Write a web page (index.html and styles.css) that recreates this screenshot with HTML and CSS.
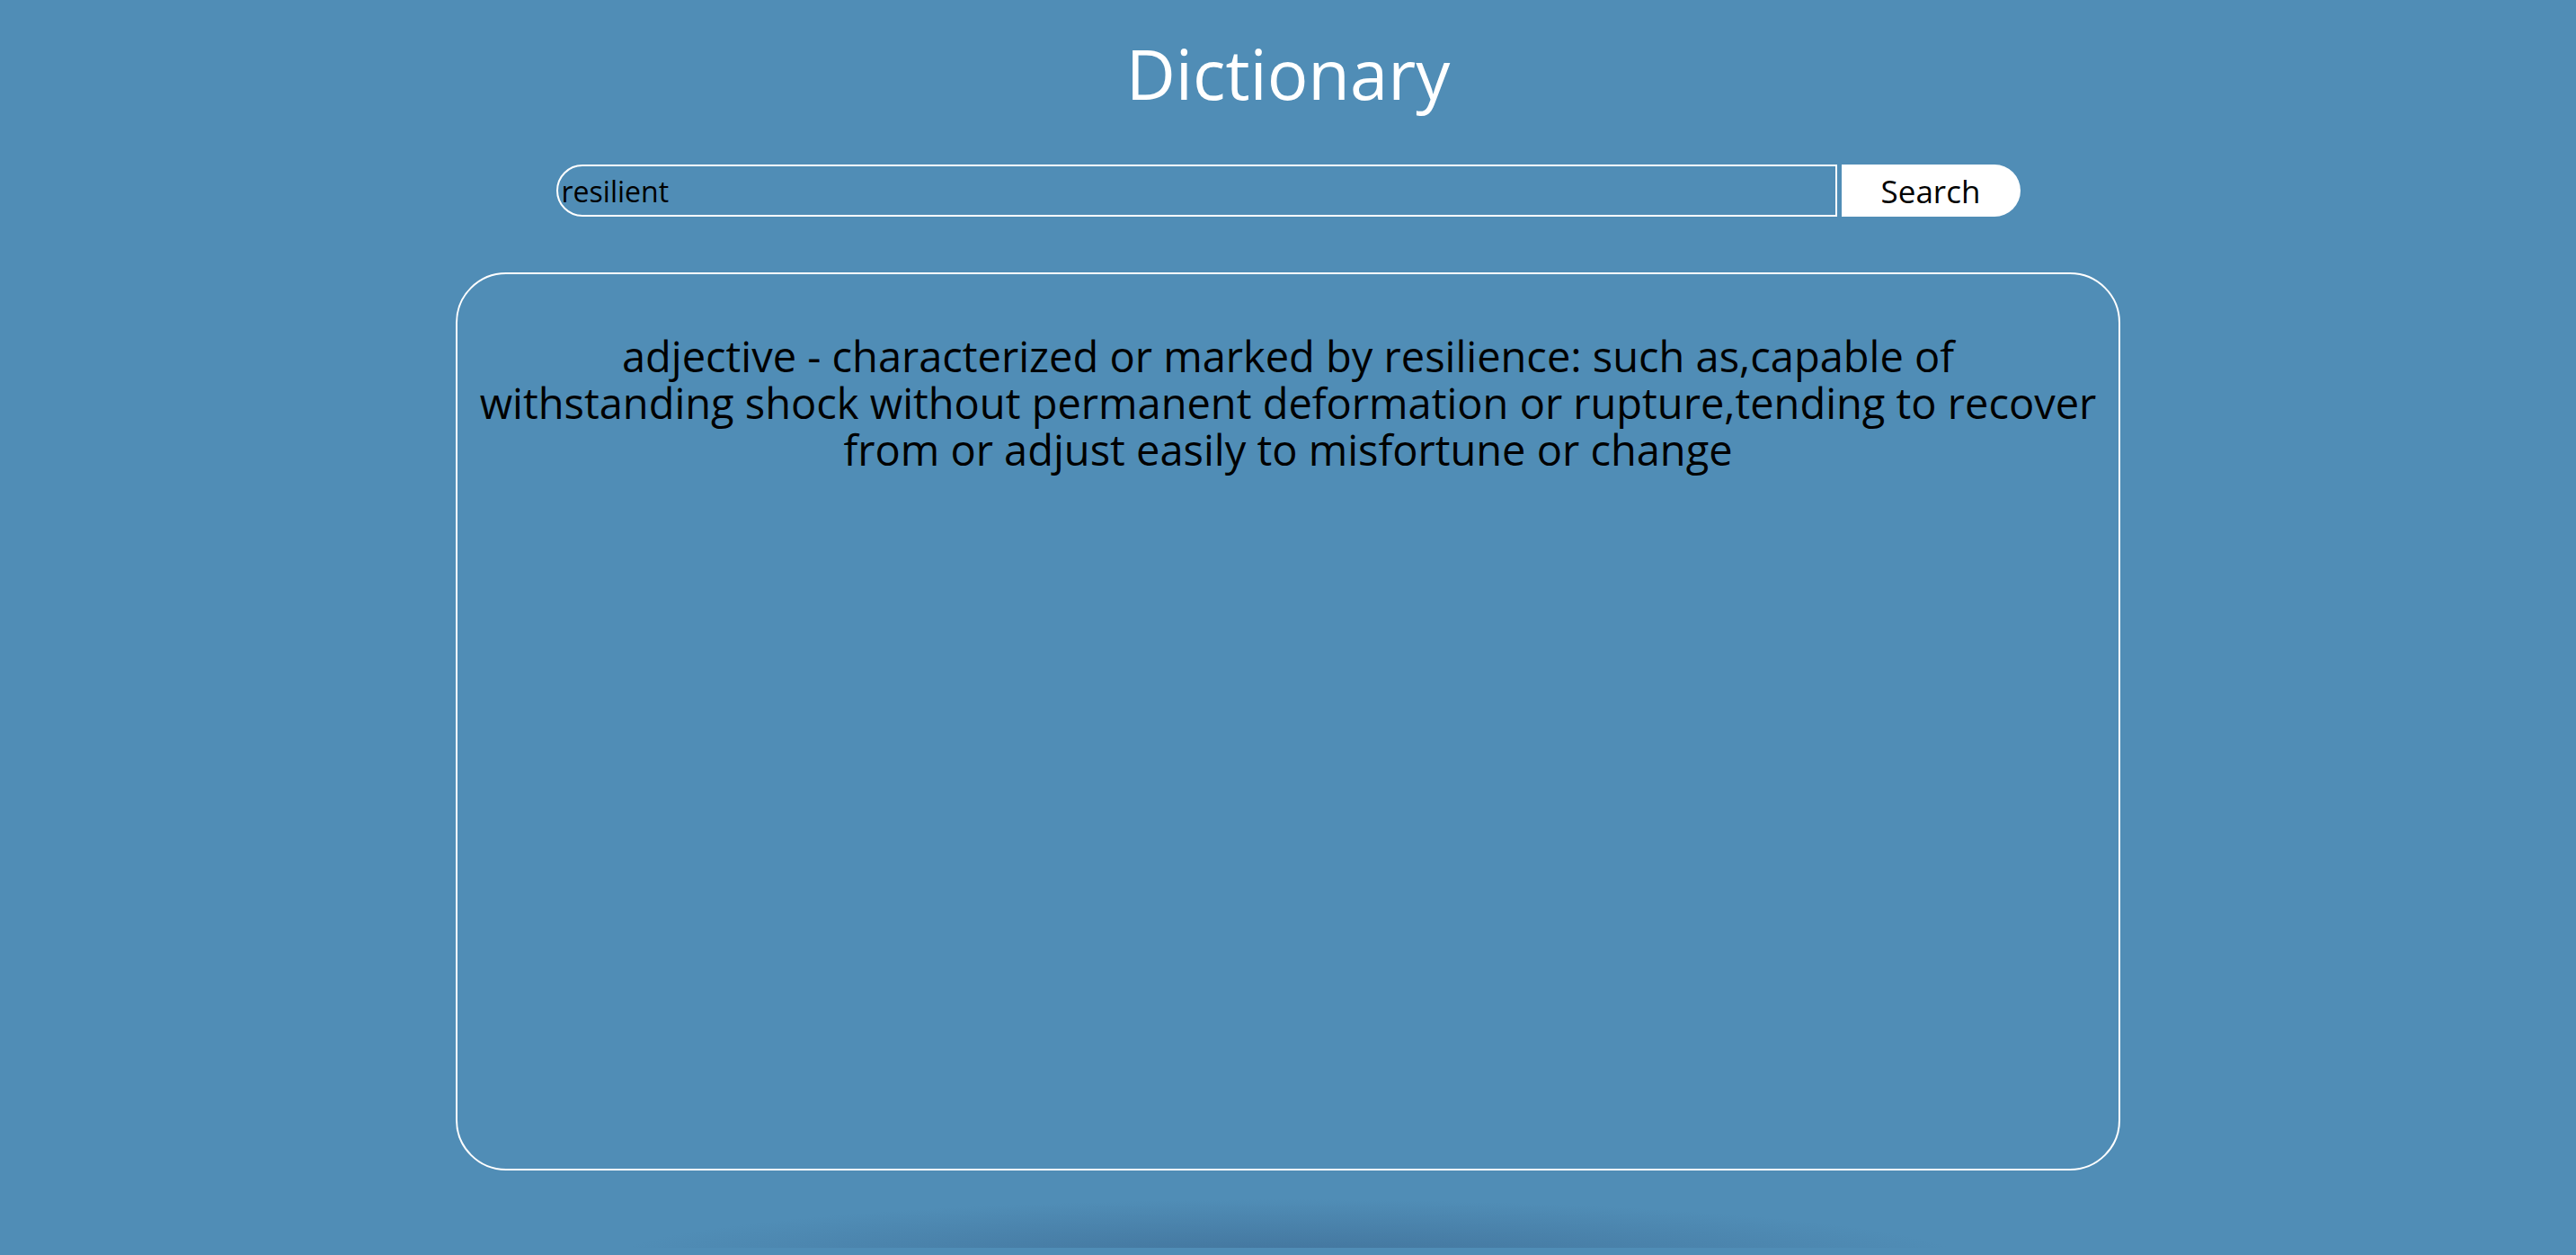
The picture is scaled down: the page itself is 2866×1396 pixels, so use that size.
FILE: index.html
```html
<!DOCTYPE html>
<html lang="en">
<head>
<meta charset="utf-8">
<title>Dictionary</title>
<link rel="stylesheet" href="styles.css">
</head>
<body>
<main class="app">
  <h1 class="title">Dictionary</h1>
  <form class="search" onsubmit="return false">
    <input class="search-input" type="text" value="resilient">
    <button class="search-btn" type="submit">Search</button>
  </form>
  <section class="result">
    <p class="definition">adjective - characterized or marked by resilience: such as,capable of<br> withstanding shock without permanent deformation or rupture,tending to recover<br> from or adjust easily to misfortune or change</p>
  </section>
</main>
</body>
</html>
```
FILE: styles.css
```css
html {
  background: #508db6;
  min-height: 100%;
}
body {
  margin: 8px;
  min-height: 1380px;
  font-family: "Open Sans", "Liberation Sans", sans-serif;
  background:
    radial-gradient(ellipse 760px 70px at 50% 1396px, rgba(60, 105, 145, 0.75), rgba(80, 141, 182, 0) 100%);
  background-repeat: no-repeat;
}
.app {
  display: flex;
  flex-direction: column;
  align-items: center;
}
.title {
  margin: 22px 0 0;
  font-size: 76px;
  line-height: 104px;
  font-weight: 400;
  color: #fff;
}
.search {
  display: flex;
  justify-content: center;
  width: 100%;
  margin-top: 49px;
}
.search-input {
  box-sizing: border-box;
  width: 50%;
  height: 58px;
  margin: 0;
  padding: 0 4px;
  border: 2px solid #fff;
  border-radius: 30px 0 0 30px;
  background: transparent;
  color: #000;
  font-family: inherit;
  font-size: 32px;
  outline: none;
}
.search-btn {
  box-sizing: border-box;
  width: 199px;
  height: 58px;
  margin: 0 0 0 5px;
  padding: 0;
  border: none;
  border-radius: 0 30px 30px 0;
  background: #fff;
  color: #000;
  font-family: inherit;
  font-size: 35px;
}
.result {
  box-sizing: border-box;
  width: 65%;
  height: 999px;
  margin-top: 62px;
  border: 2px solid #fff;
  border-radius: 56px;
  padding: 65px 8px 0;
}
.definition {
  margin: 0;
  text-align: center;
  font-size: 47px;
  line-height: 52px;
  color: #000;
}
```
